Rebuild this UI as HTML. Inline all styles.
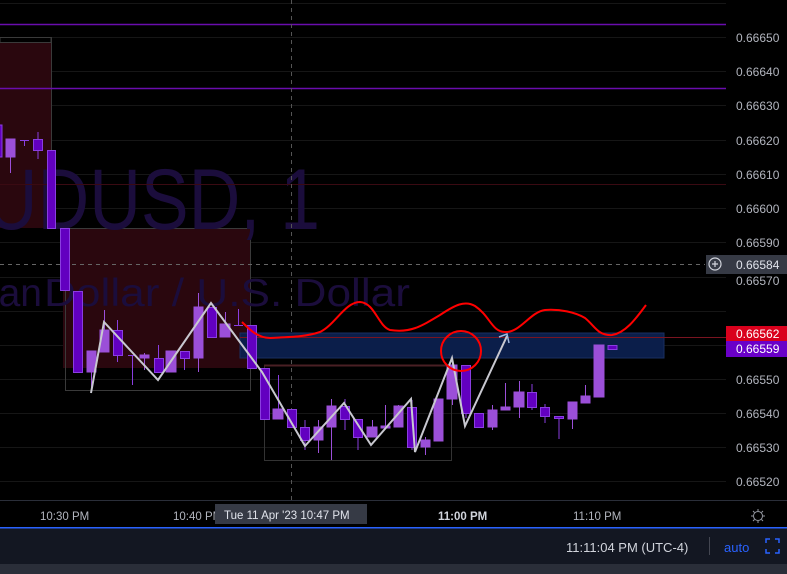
<!DOCTYPE html>
<html><head><meta charset="utf-8"><style>
html,body{margin:0;padding:0;background:#000;width:787px;height:574px;overflow:hidden;font-family:"Liberation Sans",sans-serif}
svg{position:absolute;left:0;top:0}
</style></head><body>
<svg width="787" height="574" viewBox="0 0 787 574">
<g stroke="#161616" stroke-width="1">
<line x1="0" y1="3.5" x2="726" y2="3.5"/><line x1="0" y1="37.5" x2="726" y2="37.5"/><line x1="0" y1="71.5" x2="726" y2="71.5"/><line x1="0" y1="105.5" x2="726" y2="105.5"/><line x1="0" y1="140.5" x2="726" y2="140.5"/><line x1="0" y1="174.5" x2="726" y2="174.5"/><line x1="0" y1="208.5" x2="726" y2="208.5"/><line x1="0" y1="242.5" x2="726" y2="242.5"/><line x1="0" y1="277.5" x2="726" y2="277.5"/><line x1="0" y1="311.5" x2="726" y2="311.5"/><line x1="0" y1="345.5" x2="726" y2="345.5"/><line x1="0" y1="379.5" x2="726" y2="379.5"/><line x1="0" y1="413.5" x2="726" y2="413.5"/><line x1="0" y1="447.5" x2="726" y2="447.5"/><line x1="0" y1="481.5" x2="726" y2="481.5"/>
</g>
<rect x="0" y="43" width="51" height="185" fill="#2a070e"/>
<rect x="0" y="37.5" width="51" height="5" fill="none" stroke="#3a3a3a"/>
<line x1="51.5" y1="37" x2="51.5" y2="228" stroke="#3a3a3a"/>
<rect x="63" y="228" width="188" height="140" fill="#2a070e"/>
<rect x="65.5" y="228.5" width="185" height="162" fill="none" stroke="#3a3a3a"/>
<rect x="264.5" y="365.5" width="187" height="95" fill="none" stroke="#333"/>
<line x1="264" y1="365.5" x2="452" y2="365.5" stroke="#4a1f24" stroke-width="2"/>
<g font-family="Liberation Sans, sans-serif" fill="#1b0d3c">
<text x="-62" y="229" font-size="86" textLength="382" lengthAdjust="spacingAndGlyphs">AUDUSD, 1</text>
<text x="42" y="306" font-size="39" text-anchor="end">Australian</text>
<text x="44" y="306" font-size="39" textLength="366" lengthAdjust="spacingAndGlyphs">Dollar / U.S. Dollar</text>
</g>
<line x1="0" y1="24.5" x2="726" y2="24.5" stroke="#6a0dad" stroke-width="1.5"/>
<line x1="0" y1="88.5" x2="726" y2="88.5" stroke="#6a0dad" stroke-width="1.5"/>
<line x1="0" y1="184.5" x2="726" y2="184.5" stroke="#3a0a12"/>
<line x1="0" y1="264.5" x2="705" y2="264.5" stroke="#666" stroke-dasharray="4,4"/>
<line x1="291.5" y1="0" x2="291.5" y2="500" stroke="#555" stroke-dasharray="4,4"/>
<rect x="240" y="333" width="424" height="25" fill="#0b1e4a" stroke="#1a2f60"/>
<line x1="240" y1="337.5" x2="726" y2="337.5" stroke="#7a1420"/>
<g stroke-width="1">
<g stroke="#9b4fd8" fill="#9b4fd8">
<line x1="10.5" y1="139" x2="10.5" y2="173"/><rect x="6" y="139" width="9" height="18"/>
<line x1="91.5" y1="351" x2="91.5" y2="388"/><rect x="87" y="351" width="9" height="21"/>
<line x1="104.5" y1="310" x2="104.5" y2="352"/><rect x="100" y="330" width="9" height="22"/>
<rect x="140" y="355" width="9" height="3"/><line x1="144.5" y1="353" x2="144.5" y2="370"/>
<line x1="171.5" y1="351" x2="171.5" y2="372"/><rect x="166" y="351" width="10" height="21"/>
<line x1="198.5" y1="293" x2="198.5" y2="372"/><rect x="194" y="307" width="9" height="51"/>
<line x1="225.5" y1="312" x2="225.5" y2="337"/><rect x="220" y="324" width="10" height="13"/>
<rect x="273" y="409" width="10" height="10"/>
<line x1="318.5" y1="420" x2="318.5" y2="453"/><rect x="314" y="427" width="9" height="13"/>
<line x1="331.5" y1="399" x2="331.5" y2="460"/><rect x="327" y="406" width="9" height="21"/>
<line x1="372.5" y1="420" x2="372.5" y2="437"/><rect x="367" y="427" width="10" height="10"/>
<line x1="385.5" y1="405" x2="385.5" y2="427"/><rect x="381" y="426" width="9" height="2"/>
<line x1="398.5" y1="405" x2="398.5" y2="427"/><rect x="394" y="406" width="9" height="21"/>
<line x1="425.5" y1="437" x2="425.5" y2="455"/><rect x="421" y="440" width="9" height="7"/>
<rect x="434" y="399" width="9" height="42"/>
<line x1="452.5" y1="360" x2="452.5" y2="405"/><rect x="447" y="365" width="10" height="34"/>
<line x1="492.5" y1="405" x2="492.5" y2="430"/><rect x="488" y="410" width="9" height="17"/>
<rect x="501" y="407" width="9" height="3"/><line x1="505.5" y1="383" x2="505.5" y2="410"/>
<line x1="519.5" y1="381" x2="519.5" y2="418"/><rect x="514" y="392" width="10" height="15"/>
<line x1="572.5" y1="402" x2="572.5" y2="429"/><rect x="568" y="402" width="9" height="17"/>
<line x1="585.5" y1="385" x2="585.5" y2="403"/><rect x="581" y="396" width="9" height="7"/>
<rect x="594" y="345" width="10" height="52"/>
</g>
<g stroke="#8a3ee0" fill="#6200c0">
<rect x="-3" y="125" width="5" height="32"/>
<line x1="24.5" y1="140" x2="24.5" y2="146"/><line x1="20" y1="140.5" x2="29" y2="140.5"/>
<line x1="38" y1="132" x2="38" y2="159"/><rect x="33.5" y="139.5" width="9" height="11"/>
<rect x="47.5" y="150.5" width="8" height="78"/>
<rect x="60.5" y="228.5" width="9" height="62"/>
<rect x="73.5" y="291.5" width="9" height="81"/>
<line x1="117.5" y1="320" x2="117.5" y2="362"/><rect x="113.5" y="330.5" width="9" height="25"/>
<line x1="128" y1="355.5" x2="136" y2="355.5"/><line x1="132.5" y1="355" x2="132.5" y2="385"/>
<line x1="158.5" y1="345" x2="158.5" y2="372"/><rect x="154.5" y="358.5" width="9" height="14"/>
<line x1="184.5" y1="351" x2="184.5" y2="370"/><rect x="180.5" y="351.5" width="9" height="7"/>
<rect x="207.5" y="307.5" width="9" height="30"/>
<line x1="238.5" y1="309" x2="238.5" y2="325"/><line x1="234" y1="325.5" x2="243" y2="325.5"/>
<rect x="247.5" y="325.5" width="9" height="43"/>
<rect x="260.5" y="368.5" width="9" height="51"/>
<line x1="278.5" y1="375" x2="278.5" y2="409"/>
<rect x="287.5" y="409.5" width="9" height="18"/>
<line x1="305" y1="420" x2="305" y2="450"/><rect x="300.5" y="427.5" width="9" height="13"/>
<line x1="345" y1="399" x2="345" y2="430"/><rect x="340.5" y="406.5" width="9" height="13"/>
<line x1="358" y1="419" x2="358" y2="450"/><rect x="353.5" y="419.5" width="9" height="18"/>
<line x1="412" y1="400" x2="412" y2="450"/><rect x="407.5" y="407.5" width="9" height="40"/>
<line x1="466" y1="365" x2="466" y2="418"/><rect x="461.5" y="365.5" width="9" height="48"/>
<rect x="474.5" y="413.5" width="9" height="14"/>
<line x1="532" y1="384" x2="532" y2="410"/><rect x="527.5" y="392.5" width="9" height="15"/>
<line x1="545" y1="404" x2="545" y2="423"/><rect x="540.5" y="407.5" width="9" height="9"/>
<line x1="559" y1="416" x2="559" y2="439"/><rect x="554.5" y="416.5" width="9" height="2"/>
<rect x="608" y="345.5" width="9" height="4"/>
</g>
</g>
<polyline points="91,393 104,322 158,380 211,303 262,372 305,446 344,403 371,445 411,399 415,452 452,358 465,426 507,336" fill="none" stroke="#c8c8d0" stroke-width="2"/>
<polyline points="499,337 507,334 509,343" fill="none" stroke="#a0b8e0" stroke-width="1.5"/>
<path d="M242,322 C250,330 258,338 270,338 C290,337 305,337 320,332 C335,325 345,302 360,302 C375,303 378,326 390,330 C410,333 420,327 440,315 C455,305 465,300 475,306 C490,316 492,332 505,332 C520,333 530,312 545,310 C560,309 575,312 585,318 C595,326 598,336 612,335 C625,333 635,320 646,305" fill="none" stroke="#ff0000" stroke-width="2"/>
<circle cx="461" cy="351" r="20" fill="none" stroke="#ff0000" stroke-width="2"/>
<g font-family="Liberation Sans, sans-serif" font-size="12" fill="#b2b5be">
<text x="736" y="42">0.66650</text><text x="736" y="76">0.66640</text><text x="736" y="110">0.66630</text><text x="736" y="145">0.66620</text><text x="736" y="179">0.66610</text><text x="736" y="213">0.66600</text><text x="736" y="247">0.66590</text><text x="736" y="285">0.66570</text><text x="736" y="384">0.66550</text><text x="736" y="418">0.66540</text><text x="736" y="452">0.66530</text><text x="736" y="486">0.66520</text>
</g>
<rect x="706" y="255" width="81" height="19" fill="#363a45"/>
<circle cx="715" cy="264" r="6" fill="none" stroke="#d1d4dc" stroke-width="1.2"/>
<path d="M712,264h6M715,261v6" stroke="#d1d4dc" stroke-width="1.2"/>
<text x="736" y="269" font-size="12" fill="#e0e3eb" font-family="Liberation Sans, sans-serif">0.66584</text>
<rect x="726" y="326" width="61" height="15" fill="#d9001c"/>
<text x="736" y="338" font-size="12" fill="#fff" font-family="Liberation Sans, sans-serif">0.66562</text>
<rect x="726" y="341" width="61" height="16" fill="#6a00c8"/>
<text x="736" y="353" font-size="12" fill="#fff" font-family="Liberation Sans, sans-serif">0.66559</text>
<line x1="0" y1="500.5" x2="787" y2="500.5" stroke="#2a2e39"/>
<g font-family="Liberation Sans, sans-serif" font-size="11.5" fill="#b2b5be">
<text x="40" y="520">10:30 PM</text><text x="173" y="520">10:40 PM</text>
<text x="438" y="520" font-weight="bold" fill="#d1d4dc">11:00 PM</text><text x="573" y="520">11:10 PM</text>
</g>
<rect x="215" y="504" width="152" height="20" fill="#363a45"/>
<text x="224" y="519" font-family="Liberation Sans, sans-serif" font-size="11.5" fill="#e0e3eb">Tue 11 Apr '23   10:47 PM</text>
<circle cx="758" cy="516" r="4.5" fill="none" stroke="#9598a1" stroke-width="1"/>
<path d="M758,509v2M758,521v2M751,516h2M763,516h2M753,511l1.5,1.5M763,511l-1.5,1.5M753,521l1.5,-1.5M763,521l-1.5,-1.5" stroke="#9598a1"/>
<rect x="0" y="527" width="787" height="38" fill="#131722"/>
<rect x="0" y="527" width="787" height="1.5" fill="#2962ff"/>
<rect x="0" y="564" width="787" height="10" fill="#2a2e39"/>
<text x="566" y="552" font-family="Liberation Sans, sans-serif" font-size="13" fill="#d1d4dc">11:11:04 PM (UTC-4)</text>
<line x1="709.5" y1="537" x2="709.5" y2="555" stroke="#434651"/>
<text x="724" y="552" font-family="Liberation Sans, sans-serif" font-size="13" fill="#2962ff">auto</text>
<path d="M766,543v-4h4M775,539h4v4M779,549v4h-4M770,553h-4v-4" fill="none" stroke="#2962ff" stroke-width="1.5"/>
</svg>
</body></html>
